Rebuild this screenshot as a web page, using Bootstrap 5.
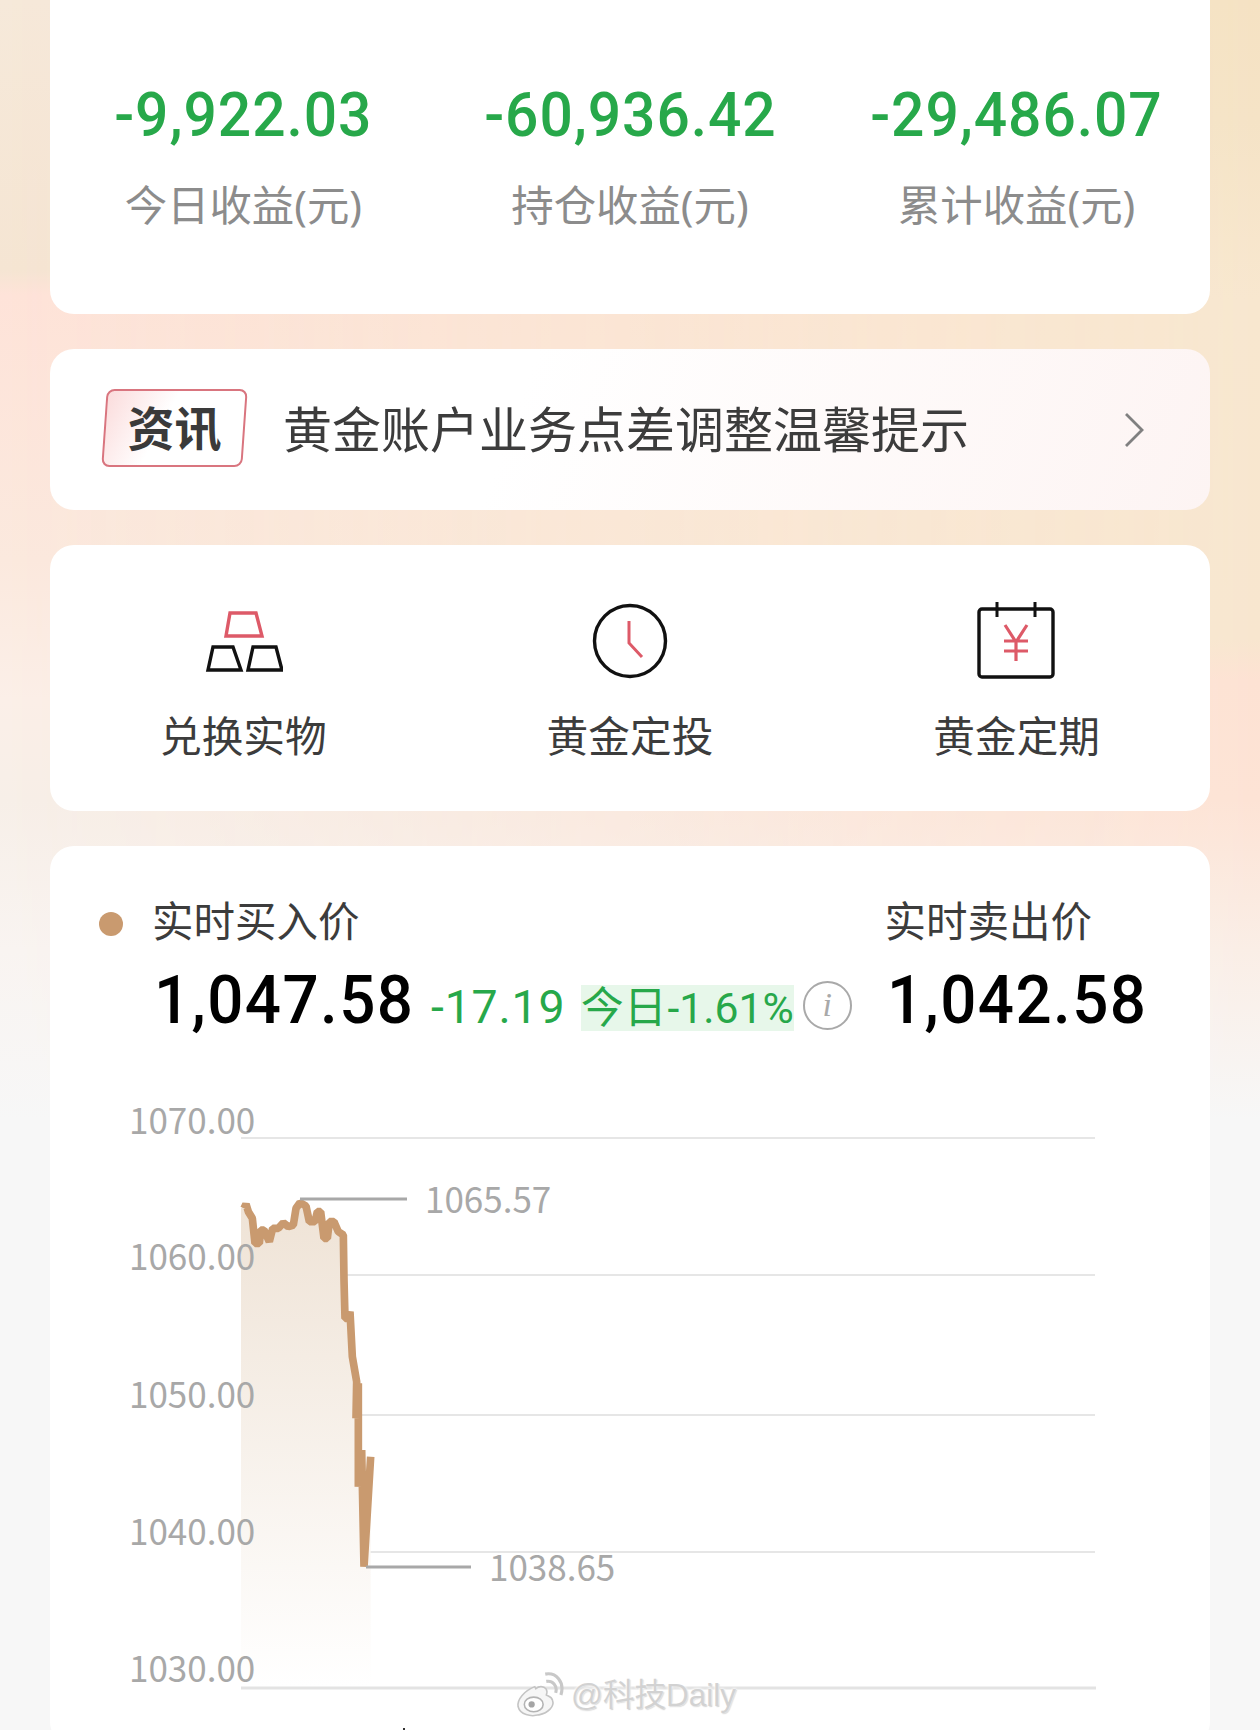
<!DOCTYPE html>
<html lang="zh-CN">
<head>
  <meta charset="UTF-8">
  <meta name="viewport" content="width=device-width, initial-scale=1">
  <title>黄金账户</title>
  <link href="https://cdn.jsdelivr.net/npm/bootstrap@5.3.0/dist/css/bootstrap.min.css" rel="stylesheet">
  <style>
    html, body { height: 1730px; overflow: hidden; }
    body {
      position: relative;
      font-family: "Noto Sans", "Noto Sans CJK SC", sans-serif;
      background: linear-gradient(180deg, #f6e9da 0, #f5e5d3 270px, #fee3d9 295px, #fbe9de 560px, #fbefe8 700px, #f7efe8 800px, #f9f4f1 950px, #f7f7f7 1120px);
    }
    /* right side of the page has its own colour run, faded in across the width */
    body::before {
      content: ""; position: absolute; inset: 0;
      background: linear-gradient(180deg, #f5e2c3 0, #f5e3c6 120px, #f8e7cf 300px, #f8e6cf 640px, #fde2d3 680px, #fde3d5 800px, #faeee6 950px, #f7f7f7 1120px);
      -webkit-mask-image: linear-gradient(90deg, transparent, #000);
      mask-image: linear-gradient(90deg, transparent, #000);
    }
    .gold-page { padding: 0 50px; position: relative; height: 1730px; }
    .panel { background: #fff; border-radius: 24px; border: 0; }
    .panel-income { height: 314px; border-radius: 0 0 24px 24px; padding-top: 84px; margin-bottom: 35px; }
    .panel-news { height: 161px; margin-bottom: 35px; padding: 0 66px 0 52px; background: linear-gradient(110deg, #fff 40%, #fdf4f3 100%); }
    .panel-links { height: 266px; margin-bottom: 35px; padding-top: 56px; }
    .panel-chart { height: 900px; padding-top: 51px; }
    .stat-col { width: 33.333%; text-align: center; }
    .din-num { font-family: Roboto, "Liberation Sans", sans-serif; font-weight: 500; white-space: nowrap; }
    .stat-num { display: inline-block; font-size: 62px; line-height: 62px; color: #27a84a; letter-spacing: 1px; transform: scaleX(.947); }
    .stat-label { font-size: 42.4px; line-height: 48px; color: #8c8c8c; margin-top: 35px; }
    .news-tag {
      width: 141px; height: 78px; margin: -4px 0 0 2px; border: 2px solid #d9757f; border-radius: 8px;
      transform: skewX(-4deg); color: #3a3a3a; font-size: 47px; font-weight: 700;
      background: linear-gradient(115deg, #fbdcdc 0%, #fff 42%);
    }
    .news-tag span { display: block; transform: skewX(4deg); line-height: 74px; text-align: center; }
    .news-text { font-size: 49px; color: #3c3c3c; margin-left: 38px; white-space: nowrap; }
    .link-label { font-size: 41.7px; line-height: 48px; color: #3c3c3c; margin-top: 31px; }
    .link-ico { height: 80px; display: block; margin: 0 auto; }
    .quote-head { font-size: 41.5px; line-height: 48px; color: #3c3c3c; padding-right: 118px; }
    .quote-dot { width: 24px; height: 24px; border-radius: 50%; background: #c99a6f; margin: 6px 29px 0 49px; }
    .quote-row { padding: 0 67px 0 104px; margin-top: 20px; }
    .quote-num { width: 256px; font-size: 67px; line-height: 70px; color: #000; letter-spacing: 1.5px; transform: scaleX(.95); transform-origin: left center; }
    .quote-diff { margin-left: 21px; font-size: 46.5px; line-height: 50px; color: #27a84a; letter-spacing: .8px; font-weight: 400; }
    .quote-pct { margin-left: 16px; font-size: 42.7px; line-height: 46px; color: #27a84a; background: #e7f7ea; font-weight: 400; }
    .quote-pct b { font-weight: 500; }
    .info-dot {
      width: 49px; height: 49px; margin: 10px 0 0 9px; border-radius: 50%; border: 2px solid #a9a9a9; color: #a9a9a9;
      font-family: "Liberation Serif", serif; font-style: italic; font-size: 34px; line-height: 44px; text-align: center;
    }
    .chart-svg { display: block; position: absolute; left: 0; top: 1090px; width: 1260px; height: 640px; }
    .chart-svg text { font-family: "Noto Sans CJK SC", "Noto Sans", sans-serif; font-size: 35px; fill: #a8a8a8; }
    .mark-wm {
      position: absolute; left: 514px; top: 1672px; display: flex; align-items: center; gap: 5px;
      font-family: "Liberation Sans", "Noto Sans CJK SC", sans-serif;
      font-size: 31.5px; line-height: 44px; color: #d2d2d2; text-shadow: 0 0 3px #fff, 0 0 3px #fff, 1px 1px 1px #c0c0c0;
    }
  </style>
</head>
<body>
  <div class="gold-page">
    <!-- 收益 -->
    <div class="panel panel-income d-flex">
      <div class="stat-col">
        <div class="din-num stat-num">-9,922.03</div>
        <div class="stat-label">今日收益(元)</div>
      </div>
      <div class="stat-col">
        <div class="din-num stat-num">-60,936.42</div>
        <div class="stat-label">持仓收益(元)</div>
      </div>
      <div class="stat-col">
        <div class="din-num stat-num">-29,486.07</div>
        <div class="stat-label">累计收益(元)</div>
      </div>
    </div>

    <!-- 资讯 -->
    <div class="panel panel-news d-flex align-items-center">
      <div class="news-tag flex-shrink-0"><span>资讯</span></div>
      <div class="news-text flex-grow-1">黄金账户业务点差调整温馨提示</div>
      <svg width="20" height="36" viewBox="0 0 20 36"><path d="M2 2 L18 18 L2 34" fill="none" stroke="#808080" stroke-width="2.8"/></svg>
    </div>

    <!-- 入口 -->
    <div class="panel panel-links d-flex">
      <div class="stat-col">
        <svg class="link-ico" width="80" height="80" viewBox="0 0 80 80">
          <path d="M27 12 H53 L59 35 H23 Z" fill="none" stroke="#dd5a68" stroke-width="3.4"/>
          <path d="M10 46 H30 L38 69 H5 Z M50 46 H73 L79 69 H45 Z" fill="none" stroke="#111" stroke-width="3.4"/>
        </svg>
        <div class="link-label">兑换实物</div>
      </div>
      <div class="stat-col">
        <svg class="link-ico" width="80" height="80" viewBox="0 0 80 80">
          <circle cx="40" cy="40" r="35.5" fill="none" stroke="#111" stroke-width="3.4"/>
          <path d="M39 20 V42 L52 56" fill="none" stroke="#dd5a68" stroke-width="3"/>
        </svg>
        <div class="link-label">黄金定投</div>
      </div>
      <div class="stat-col">
        <svg class="link-ico" width="80" height="80" viewBox="0 0 80 80">
          <rect x="2" y="8" width="74" height="68" rx="3" fill="none" stroke="#111" stroke-width="3.4"/>
          <path d="M20 1 V16 M58 1 V16" fill="none" stroke="#111" stroke-width="3"/>
          <path d="M28 24 L39 41 L50 24 M39 41 V60 M27 40 H51 M27 50 H51" fill="none" stroke="#dd5a68" stroke-width="3.2"/>
        </svg>
        <div class="link-label">黄金定期</div>
      </div>
    </div>

    <!-- 实时价格 -->
    <div class="panel panel-chart">
      <div class="d-flex quote-head">
        <div class="d-flex align-items-center">
          <span class="quote-dot"></span><span>实时买入价</span>
        </div>
        <div class="ms-auto">实时卖出价</div>
      </div>
      <div class="d-flex align-items-baseline quote-row">
        <span class="din-num quote-num">1,047.58</span>
        <span class="din-num quote-diff">-17.19</span>
        <span class="din-num quote-pct"><b>今日</b>-1.61%</span>
        <span class="info-dot align-self-center">i</span>
        <span class="din-num quote-num ms-auto">1,042.58</span>
      </div>
    </div>

    <svg class="chart-svg" viewBox="0 1090 1260 640">
      <defs>
        <linearGradient id="areaFill" x1="0" y1="0" x2="0" y2="1">
          <stop offset="0" stop-color="#efe3d6"/>
          <stop offset="1" stop-color="#fff"/>
        </linearGradient>
      </defs>
      <path d="M241 1138 H1095 M241 1275 H1095 M241 1415 H1095 M241 1552 H1095" stroke="#e6e6e6" stroke-width="2"/>
      <g transform="translate(220 1180) scale(.33333)">
        <path fill="url(#areaFill)" d="M63 85 L78 72 L85 95 L97 115 L105 190 L118 190 L122 150 L132 150 L148 185 L158 145 L175 145 L190 128 L205 140 L220 135 L228 85 L240 68 L258 78 L268 125 L285 125 L292 95 L302 95 L312 175 L322 175 L328 125 L342 125 L355 155 L370 165 L372 300 L375 415 L385 415 L390 395 L397 530 L410 605 L408 715 L415 610 L415 920 L425 810 L432 1160 L440 1030 L452 830 L452 1520 L63 1520 Z"/>
        <path fill="none" stroke="#c99a6f" stroke-width="23" stroke-linejoin="bevel" d="M72 85 L78 72 L85 95 L97 115 L105 190 L118 190 L122 150 L132 150 L148 185 L158 145 L175 145 L190 128 L205 140 L220 135 L228 85 L240 68 L258 78 L268 125 L285 125 L292 95 L302 95 L312 175 L322 175 L328 125 L342 125 L355 155 L370 165 L372 300 L375 415 L385 415 L390 395 L397 530 L410 605 L408 715 L415 610 L415 920 L425 810 L432 1160 L440 1030 L452 830"/>
      </g>
      <path d="M241 1688 H1096" stroke="#e3e3e3" stroke-width="3"/>
      <path d="M300 1199 H407 M366 1567 H471" stroke="#a8a8a8" stroke-width="3"/>
      <text x="129" y="1134">1070.00</text>
      <text x="129" y="1270">1060.00</text>
      <text x="129" y="1408">1050.00</text>
      <text x="129" y="1545">1040.00</text>
      <text x="129" y="1682">1030.00</text>
      <text x="425" y="1213">1065.57</text>
      <text x="489" y="1581">1038.65</text>
      <path d="M404 1728 V1730" stroke="#333" stroke-width="2"/>
    </svg>

    <div class="mark-wm">
      <svg width="52" height="46" viewBox="0 0 46 44">
        <path d="M18 14 C8 18 1 26 2 33 C4 41 14 43 22 41 C31 39 37 33 35 27 C34 23 30 23 29 22 C31 17 28 14 24 14 C22 14 20 15 19 16 Z" fill="#f6f6f6" stroke="#c4c4c4" stroke-width="1.5"/>
        <ellipse cx="17" cy="31" rx="9" ry="7" fill="#fff" stroke="#b4b4b4" stroke-width="1.5"/>
        <circle cx="15" cy="31" r="3" fill="#a5a5a5"/>
        <path d="M29 9 C35 8 40 13 38 20 M28 2 C38 0 47 9 43 22" fill="none" stroke="#c8c8c8" stroke-width="3"/>
      </svg>
      <span>@科技Daily</span>
    </div>
  </div>
  <script src="https://cdn.jsdelivr.net/npm/bootstrap@5.3.0/dist/js/bootstrap.bundle.min.js"></script>
</body>
</html>
